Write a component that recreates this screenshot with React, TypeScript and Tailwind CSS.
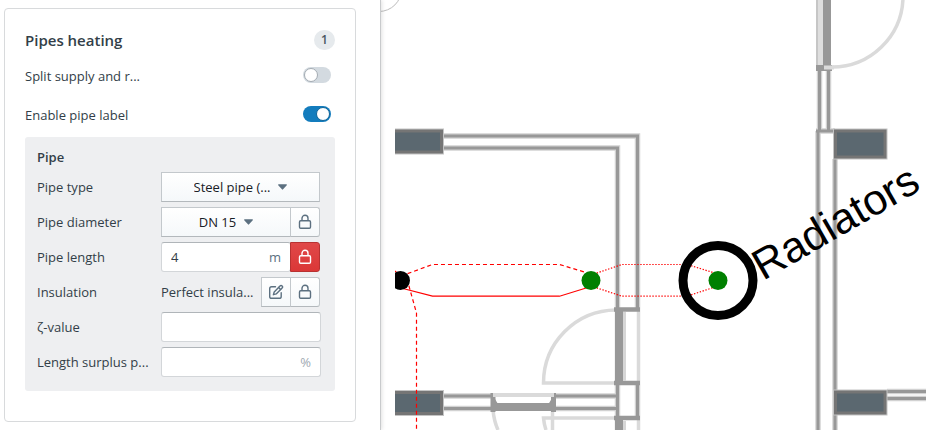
import React, { useState } from 'react';
import type { ReactNode } from 'react';

const LockIcon = () => (
  <svg width="16" height="16" viewBox="0 0 16 16" fill="none" stroke="currentColor" strokeWidth="1.4" aria-hidden="true">
    <rect x="2.5" y="6.7" width="11" height="7.6" rx="1.2" />
    <path d="M5 6.7V4.3a3 3 0 0 1 6 0v2.4" />
  </svg>
);

const EditIcon = () => (
  <svg
    width="16"
    height="16"
    viewBox="0 0 16 16"
    fill="none"
    stroke="currentColor"
    strokeWidth="1.4"
    strokeLinejoin="round"
    strokeLinecap="round"
    aria-hidden="true"
  >
    <path d="M7.5 2.8H3.6a1.9 1.9 0 0 0-1.9 1.9v7.7a1.9 1.9 0 0 0 1.9 1.9h7.7a1.9 1.9 0 0 0 1.9-1.9V8.8" />
    <path d="M12 1.9a1.45 1.45 0 0 1 2.1 2.1L8.2 9.9l-2.8.8.8-2.8z" />
    <path d="M10.6 3.4l2 2" />
  </svg>
);

const Caret = () => (
  <svg width="9" height="6" viewBox="0 0 8 5" className="shrink-0 text-[#5c7080]" aria-hidden="true">
    <path d="M0.6 0h6.8c.5 0 .7.5.4.9L4.5 4.6c-.3.4-.7.4-1 0L.2.9C-.1.5.1 0 .6 0z" fill="currentColor" />
  </svg>
);

const iconButton = 'relative flex h-[30px] w-[30px] shrink-0 items-center justify-center border';
const lightButton = 'border-[#c3c8cc] border-b-[#b3b8bc] bg-gradient-to-b from-white to-[#f5f8fa] text-[#5c7080]';
const field =
  'flex h-[30px] min-w-0 flex-1 items-center rounded-[3px] border border-[#d3d6d9] border-t-[#b0b5b9] bg-white px-[9px]';

const Toggle = ({ id, label, initial }: { id: string; label: string; initial: boolean }) => {
  const [on, setOn] = useState(initial);
  return (
    <div className="flex h-[39px] items-center justify-between pr-1">
      <label htmlFor={id} className="pt-0.5">
        {label}
      </label>
      <input
        id={id}
        type="checkbox"
        checked={on}
        onChange={() => setOn(!on)}
        className="flex h-4 w-7 shrink-0 cursor-pointer appearance-none items-center rounded-full bg-[#d3dae0] px-px before:h-3.5 before:w-3.5 before:rounded-full before:border before:border-[#a3abb2] before:bg-white checked:justify-end checked:bg-[#137cbd] checked:before:border-[#0e6499]"
      />
    </div>
  );
};

const Row = ({ id, label, grouped, children }: { id: string; label: string; grouped?: boolean; children: ReactNode }) => (
  <div className="grid grid-cols-[124px_1fr] items-center">
    <label htmlFor={id} className="whitespace-nowrap">
      {label}
    </label>
    <div className={grouped ? 'flex min-w-0 pr-px' : 'flex min-w-0'}>{children}</div>
  </div>
);

const Dropdown = ({ id, value }: { id: string; value: string }) => (
  <div className={`flex h-[30px] min-w-0 flex-1 items-center justify-center gap-2 border ${lightButton}`}>
    <select id={id} className="field-sizing-content appearance-none bg-transparent text-[#182026] outline-none">
      <option>{value}</option>
    </select>
    <Caret />
  </div>
);

const PipePanel = () => (
  <aside className="z-10 w-[381px] shrink-0 border-r border-[#c8cacc] bg-white pt-2 pr-6 pb-2 pl-1 shadow-[1px_0_4px_rgba(0,0,0,0.12)]">
    <section className="rounded-[4px] border border-[#d8dadc] px-5 pt-4 pb-[30px]">
      <header className="flex h-[30px] items-center justify-between">
        <h2 className="text-[15px] font-semibold text-[#323e48]">Pipes heating</h2>
        <span className="flex h-5 w-[21px] items-center justify-center rounded-full bg-[#e6eaed] text-xs font-semibold text-[#4a5660]">
          1
        </span>
      </header>
      <Toggle id="split" label="Split supply and r..." initial={false} />
      <Toggle id="pipe-label" label="Enable pipe label" initial={true} />

      <div className="mt-1 flex flex-col gap-[5px] rounded-[3px] bg-[#eeeff1] pt-[10px] pr-[14px] pb-[14px] pl-3">
        <h3 className="h-5 leading-5 font-semibold">Pipe</h3>
        <Row id="type" label="Pipe type" grouped>
          <Dropdown id="type" value="Steel pipe (..." />
        </Row>
        <Row id="diameter" label="Pipe diameter" grouped>
          <Dropdown id="diameter" value="DN 15" />
          <button aria-label="Lock pipe diameter" className={`${iconButton} ${lightButton} -ml-px rounded-r-[3px]`}>
            <LockIcon />
          </button>
        </Row>
        <Row id="length" label="Pipe length" grouped>
          <div className={field}>
            <input id="length" defaultValue="4" className="min-w-0 flex-1 bg-transparent outline-none" />
            <span className="text-[#5c7080]">m</span>
          </div>
          <button
            aria-label="Unlock pipe length"
            className={`${iconButton} -ml-px rounded-r-[3px] border-[#b83232] bg-gradient-to-b from-[#e04848] to-[#db3737] text-white`}
          >
            <LockIcon />
          </button>
        </Row>
        <Row id="insulation" label="Insulation" grouped>
          <output id="insulation" className="min-w-0 flex-1 self-center whitespace-nowrap">
            Perfect insula...
          </output>
          <button aria-label="Edit insulation" className={`${iconButton} ${lightButton}`}>
            <EditIcon />
          </button>
          <button aria-label="Lock insulation" className={`${iconButton} ${lightButton} -ml-px rounded-r-[3px]`}>
            <LockIcon />
          </button>
        </Row>
        <Row id="zeta" label="ζ-value">
          <div className={field}>
            <input id="zeta" className="min-w-0 flex-1 bg-transparent outline-none" />
          </div>
        </Row>
        <Row id="surplus" label="Length surplus p...">
          <div className={field}>
            <input id="surplus" className="min-w-0 flex-1 bg-transparent outline-none" />
            <span className="text-[#a0a9b2]">%</span>
          </div>
        </Row>
      </div>
    </section>
  </aside>
);

// centre lines of the walls, stroked twice for the soft edge
const walls =
  'M443 136H637.5V309M443 148H617.5V430M637.5 384V418M443 396H491M443 408.5H491M555 396H617M555 408.5H617' +
  'M819.5 70V131M828.5 70V131M818 131V430M835 159V430M816 131H835M887 391.5H926M887 398.5H926';

const Column = ({ x, y, w, h }: { x: number; y: number; w: number; h: number }) => (
  <g>
    <rect x={x} y={y} width={w} height={h} fill="none" stroke="#c4c4c4" strokeWidth="2" />
    <rect x={x} y={y} width={w} height={h} fill="#757575" />
    <rect x={x + 3} y={y + 3} width={w - 6} height={h - 6} fill="#5b6870" />
  </g>
);

const FloorPlan = () => (
  <svg viewBox="381 0 545 430" preserveAspectRatio="xMinYMin slice" className="absolute inset-0 h-full w-full">
    <defs>
      <clipPath id="sheet">
        <rect x="395" y="0" width="531" height="430" />
      </clipPath>
    </defs>
    <circle cx="379" cy="-11" r="22.5" fill="none" stroke="#bdbdbd" />

    <g clipPath="url(#sheet)">
      <g fill="none">
        <path d={walls} stroke="#d2d2d2" strokeWidth="5.5" />
        <path d={walls} stroke="#989898" strokeWidth="3" />

        {/* doors */}
        <g stroke="#dadada" strokeWidth="3.5">
          <path d="M616 310A73 73 0 0 0 543.5 383H616M638.5 309V384" />
          <path d="M546 430Q544 424 543.5 418H616M638.5 418V430M552.5 411V430" />
          <path d="M493 410Q494 421 498 430" />
          <path d="M903 -2A71 71 0 0 1 831 67" />
        </g>
        <g stroke="#989898">
          <path d="M614 309.5H640M614 383H640M614 418H640" strokeWidth="4.5" />
          <path d="M619 308V385M619 416V432" strokeWidth="8" />
          <path d="M816 68H832" strokeWidth="6" />
          <path d="M827 0V68" strokeWidth="8" />
          <path d="M491 407H556" strokeWidth="8" />
          <path d="M493 393V412M553.5 393V412" strokeWidth="5" />
        </g>
        {/* splayed corners of the window sill */}
        <path d="M495 399L498 404H495ZM551.5 399L548.5 404H551.5Z" fill="#989898" />
        <path d="M624.5 312V381M624.5 421V430" stroke="#d6d6d6" strokeWidth="3" />
        <path d="M819.5 0V65" stroke="#dedede" strokeWidth="7" />
        <path d="M817 0V65" stroke="#c6c6c6" strokeWidth="2" />
        <path d="M493 395H554" stroke="#dadada" strokeWidth="4" />
        <path d="M824 67.5H834" stroke="#dadada" strokeWidth="4" />
      </g>

      <Column x={390} y={129.5} w={53} h={24} />
      <Column x={390} y={391} w={53} h={24} />
      <Column x={834} y={129.5} w={52.5} h={29} />
      <Column x={834} y={390.5} w={52.5} h={24} />

      {/* heating pipes */}
      <g fill="none" stroke="#ff0000" strokeWidth="1.2">
        <path d="M395 271L401 277" />
        <path d="M401 288L432.5 296.2H559.5L591 286.5" />
        <path d="M401 276L432.5 264.5H559.5L591 274" strokeDasharray="4 3" />
        <path d="M407 279L416.5 313V430" strokeDasharray="4 3" />
        <path d="M591 275L622 264.5H687L718 274" strokeDasharray="1.4 1.6" />
        <path d="M591 286L622 296.2H687L718 286" strokeDasharray="1.4 1.6" />
      </g>
      <circle cx="400.5" cy="280.5" r="9.5" />
      <circle cx="591" cy="280.5" r="9.5" fill="#008000" />
      <circle cx="718" cy="280.5" r="35" fill="none" stroke="#000" strokeWidth="9" />
      <circle cx="718" cy="280.5" r="9.5" fill="#008000" />
      <text
        transform="translate(763 281) rotate(-30)"
        className="font-['Liberation_Sans',Arial,sans-serif] text-[43px]"
      >
        Radiators
      </text>
    </g>
  </svg>
);

const App = () => (
  <div className="flex min-h-screen bg-white font-['Open_Sans','Noto_Sans',sans-serif] text-[13px] leading-5 text-[#323e48]">
    <PipePanel />
    <main className="relative flex-1 overflow-hidden">
      <FloorPlan />
    </main>
  </div>
);

export default App;
